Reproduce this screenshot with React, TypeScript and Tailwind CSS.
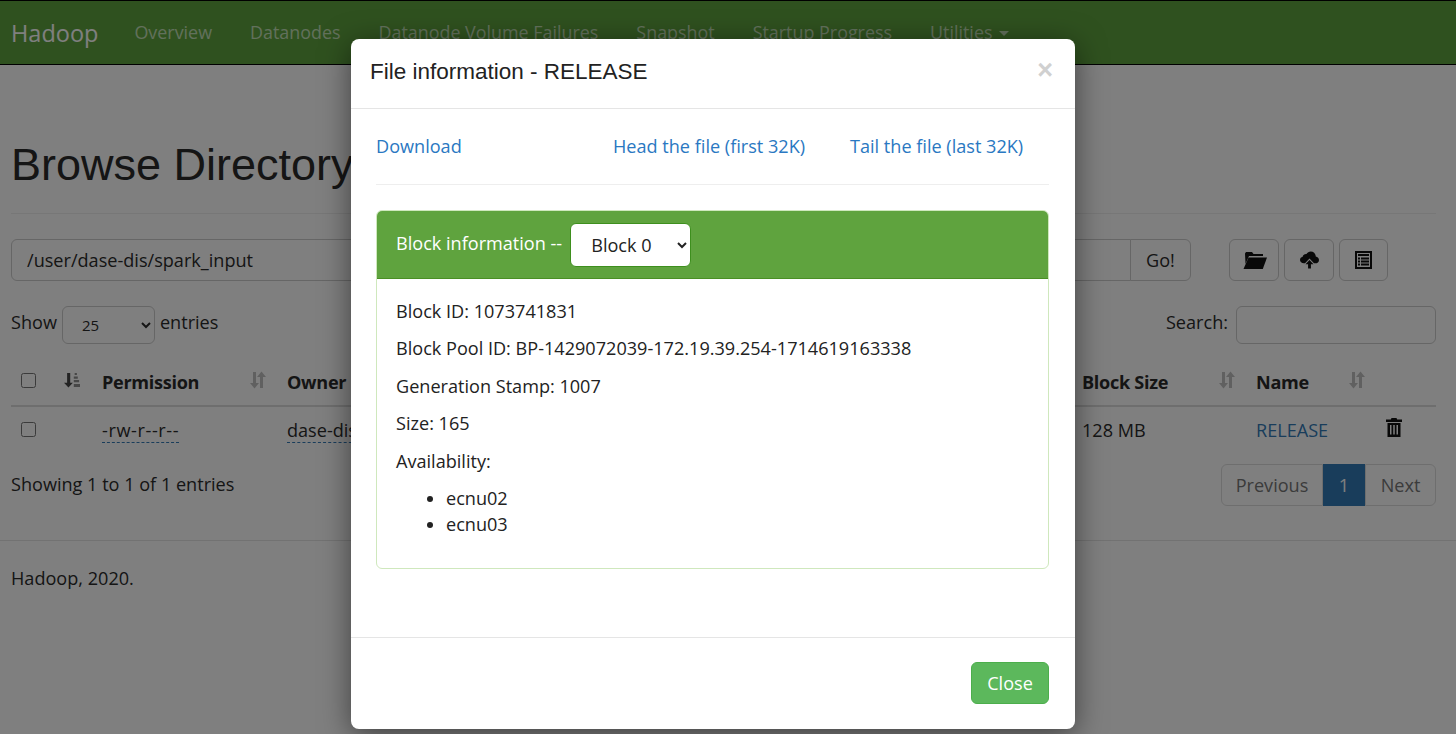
import { useState } from 'react';

const NAV_ITEMS = ['Overview', 'Datanodes', 'Datanode Volume Failures', 'Snapshot', 'Startup Progress'];
const BODY_FONT = "font-['Open_Sans','Noto_Sans',sans-serif]";

function SortIcon({ className = 'text-[#333]/30' }: { className?: string }) {
  return (
    <svg viewBox="0 0 18 18" className={`-mr-[2px] -mt-[4px] h-[18px] w-[18px] ${className}`} fill="currentColor">
      <path d="M4 1h3v11h3l-4.500 5.500L1 12h3zM11 6H8l4.500-5.500L17 6h-3v11h-3z" />
    </svg>
  );
}

function SortActiveIcon() {
  return (
    <svg viewBox="0 0 18 18" className="-mt-[4px] h-[18px] w-[18px] text-[#333]" fill="currentColor">
      <path d="M3.500 1h3.500v11h3l-5 5.500-5-5.500h3.500z" opacity=".9" />
      <path d="M12 1h2.500v2.500H12zM11 5h4.500v2.500H11zM11 9h6v2.500h-6zM11 13.500h7V17h-7z" opacity=".55" />
    </svg>
  );
}

function FolderIcon() {
  return (
    <svg viewBox="0 0 24 20" className="ml-[2px] h-[20px] w-[24px] text-[#111]" fill="currentColor">
      <path d="M3 2h6l1.500 2H20v2H6L2.500 14 2 3.500z" />
      <path d="M5.500 7.500H24L19.800 19H0.500z" />
    </svg>
  );
}

function CloudIcon() {
  return (
    <svg viewBox="0 0 20 18" className="h-[18px] w-[19px] text-[#111]" fill="currentColor">
      <path d="M4 12.500C1.800 12.500 0 11 0 9c0-1.700 1.200-3 2.800-3.300C3.300 3.500 5 2.300 6.800 2.600 7.800.9 9.500 0 11.300 0c3 0 5.200 2.300 5.300 5.200 2 .3 3.400 1.800 3.400 3.700 0 2.100-1.700 3.600-3.800 3.600h-1.500L10 7.500 5.300 12.500z" />
      <path d="M10 9l4.200 4.500h-2.700V18h-3v-4.500H5.800z" />
    </svg>
  );
}

function ListIcon() {
  return (
    <svg viewBox="0 0 17 18" className="h-[18px] w-[17px] text-[#111]" fill="currentColor" fillRule="evenodd">
      <path d="M0 0h17v18H0zM2 2v14h13V2zM3 3h11v2H3zM3 6.500h2v2H3zM6 6.500h8v2H6zM3 9.500h2v2H3zM6 9.500h8v2H6zM3 12.500h2v2H3zM6 12.500h8v2H6z" />
    </svg>
  );
}

function TrashIcon() {
  return (
    <svg viewBox="0 0 16 19" className="mb-[8px] h-[19px] w-[16px] text-[#111]" fill="currentColor" fillRule="evenodd">
      <path d="M5.500 0h5l.7 1.600H16v2.400H0V1.600h4.800zM1.500 5h13v14h-13zM4 7v9.500h1.500V7zM7.250 7v9.500h1.500V7zM10.500 7v9.500H12V7z" />
    </svg>
  );
}

function Header({ label, width, active }: { label?: string; width: string; active?: boolean }) {
  return (
    <th className={`${width} border-b-2 border-[#ddd] px-[11px] pb-[10px] pt-[15px] text-left font-bold`}>
      <div className="flex items-center justify-between">
        <span className="tracking-[-0.3px]">{label}</span>
        {label && <SortIcon />}
        {active && <SortActiveIcon />}
      </div>
    </th>
  );
}

function BackgroundPage() {
  return (
    <div className={`${BODY_FONT} text-[18.100px] leading-[26px] text-[#2b2b2b]`}>
      <nav className="flex h-[65px] items-center border-y border-black bg-[#5fa33e] px-[11px]">
        <span className="mr-[36px] text-[23.500px] text-white">Hadoop</span>
        <ul className="mb-[1px] flex gap-[38px] text-[17.900px] text-[#c4e0b8]">
          {NAV_ITEMS.map(item => (
            <li key={item}>{item}</li>
          ))}
          <li className="flex items-center gap-[7px]">
            Utilities
            <span className="mt-[3px] border-x-[5px] border-t-[5px] border-x-transparent border-t-[#c4e0b8]" />
          </li>
        </ul>
      </nav>

      <main className="pl-[11px] pr-[20px]">
        <h1 className="mt-[73px] font-['Liberation_Sans',sans-serif] text-[45px] leading-[54px]">Browse Directory</h1>
        <div className="mt-[21px] border-t border-[#eee]" />

        <div className="mt-[25px] flex items-center">
          <div className="flex h-[42px] w-[1120px] items-center rounded-l-md border border-[#ccc] bg-white pl-[15px]">
            /user/dase-dis/spark_input
          </div>
          <button className="-ml-px h-[42px] w-[61px] rounded-r-md border border-[#ccc] bg-white">Go!</button>
          <div className="ml-[38px] flex gap-[5px]">
            <button className="flex h-[42px] w-[50px] items-center justify-center rounded-md border border-[#ccc] bg-white"><FolderIcon /></button>
            <button className="flex h-[42px] w-[50px] items-center justify-center rounded-md border border-[#ccc] bg-white"><CloudIcon /></button>
            <button className="flex h-[42px] w-[49px] items-center justify-center rounded-md border border-[#ccc] bg-white"><ListIcon /></button>
          </div>
        </div>

        <div className="mt-[25px] flex items-center justify-between">
          <div className="flex items-center gap-[5px]">
            <span className="mb-[6px]">Show</span>
            <select className="h-[38px] w-[93px] rounded-md border border-[#ccc] bg-white pl-[15px] text-[15px]">
              <option>25</option>
            </select>
            <span className="mb-[6px]">entries</span>
          </div>
          <div className="flex items-center gap-[8px]">
            <span className="mb-[6px]">Search:</span>
            <div className="h-[38px] w-[200px] rounded-md border border-[#ccc] bg-white" />
          </div>
        </div>

        <table className="mt-[10px] w-full table-fixed border-collapse">
          <thead>
            <tr>
              <th className="w-[42px] border-b-2 border-[#ddd] pb-[12px] pl-[10px] pt-[13px] text-left"><input type="checkbox" className="block h-[15px] w-[15px]" /></th>
              <Header width="w-[38px]" active />
              <Header label="Permission" width="w-[185px]" />
              <Header label="Owner" width="w-[185px]" />
              <Header width="w-[610px]" />
              <Header label="Block Size" width="w-[174px]" />
              <Header label="Name" width="w-[130px]" />
              <th className="border-b-2 border-[#ddd]" />
            </tr>
          </thead>
          <tbody>
            <tr>
              <td className="px-[10px] pb-[13px] pt-[9px]"><input type="checkbox" className="block h-[15px] w-[15px]" /></td>
              <td />
              <td className="px-[11px] pb-[12px] pt-[10px]"><span className="border-b border-dashed border-[#337ab7] tracking-[0.6px]">-rw-r--r--</span></td>
              <td className="px-[11px] pb-[12px] pt-[10px]"><span className="border-b border-dashed border-[#337ab7]">dase-dis</span></td>
              <td />
              <td className="px-[11px] pb-[12px] pt-[10px]">128 MB</td>
              <td className="px-[11px] pb-[12px] pt-[10px] text-[#337ab7]">RELEASE</td>
              <td className="pl-[11px]"><TrashIcon /></td>
            </tr>
          </tbody>
        </table>

        <div className="mt-[9px] flex items-start justify-between">
          <span className="mt-[7px]">Showing 1 to 1 of 1 entries</span>
          <div className="flex h-[42px] items-stretch text-[#777]">
            <span className="flex w-[102px] items-center justify-center rounded-l-md border border-[#ddd] bg-white">Previous</span>
            <span className="flex w-[42px] items-center justify-center border border-[#337ab7] bg-[#337ab7] text-white">1</span>
            <span className="flex w-[71px] items-center justify-center rounded-r-md border border-[#ddd] bg-white">Next</span>
          </div>
        </div>

        <div className="-ml-[11px] -mr-[20px] mt-[34px] border-t border-[#e5e5e5]" />
        <p className="mt-[24px]">Hadoop, 2020.</p>
      </main>
    </div>
  );
}

function FileModal() {
  const [block, setBlock] = useState('Block 0');

  return (
    <div className={`${BODY_FONT} absolute left-[351px] top-[39px] flex h-[690px] w-[724px] flex-col rounded-lg bg-white text-[18.100px] leading-[26px] text-[#222] shadow-[0_6px_30px_rgba(0,0,0,0.5)]`}>
      <div className="flex h-[70px] shrink-0 items-center justify-between border-b border-[#e5e5e5] pl-[19px] pr-[22px]">
        <h4 className="mb-[4px] font-['Liberation_Sans',sans-serif] text-[22.500px]">File information - RELEASE</h4>
        <span className="mb-[8px] font-['Liberation_Sans',sans-serif] text-[27px] font-bold text-[#d0d0d0]">×</span>
      </div>

      <div className="flex-1 pl-[25px] pr-[26px]">
        <div className="flex h-[76px] items-center border-b border-[#eee] text-[#2a78c2]">
          <a className="mb-[2px] w-[237px]">Download</a>
          <a className="mb-[2px] w-[237px]">Head the file (first 32K)</a>
          <a className="mb-[2px]">Tail the file (last 32K)</a>
        </div>

        <div className="mt-[25px] h-[359px] overflow-hidden rounded-md border border-[#cfe8bd]">
          <div className="flex h-[68px] items-center border-b border-[#4a8f24] bg-[#5fa33e] px-[19px] text-white">
            <span className="mb-[4px]">Block information --</span>
            <select
              value={block}
              onChange={e => setBlock(e.target.value)}
              className="ml-[8px] h-[44px] w-[121px] rounded-md border border-[#3e8f1e] bg-white pl-[16px] text-[#222]"
            >
              <option>Block 0</option>
            </select>
          </div>
          <div className="px-[19px] pt-[18.600px]">
            <p className="mb-[11.500px]">Block ID: 1073741831</p>
            <p className="mb-[11.500px]">Block Pool ID: BP-1429072039-172.19.39.254-1714619163338</p>
            <p className="mb-[11.500px]">Generation Stamp: 1007</p>
            <p className="mb-[11.500px]">Size: 165</p>
            <p className="mb-[11.500px]">Availability:</p>
            <ul className="list-disc pl-[50px]">
              <li>ecnu02</li>
              <li>ecnu03</li>
            </ul>
          </div>
        </div>
      </div>

      <div className="flex h-[92px] shrink-0 items-center justify-end border-t border-[#e5e5e5] pb-[2px] pr-[26px]">
        <button className="h-[42px] w-[78px] rounded-md border border-[#4cae4c] bg-[#5cb85c] text-white">Close</button>
      </div>
    </div>
  );
}

export default function App() {
  return (
    <div className="relative h-[734px] w-[1456px] overflow-hidden bg-white">
      <BackgroundPage />
      <div className="absolute inset-0 bg-black/50" />
      <FileModal />
    </div>
  );
}
